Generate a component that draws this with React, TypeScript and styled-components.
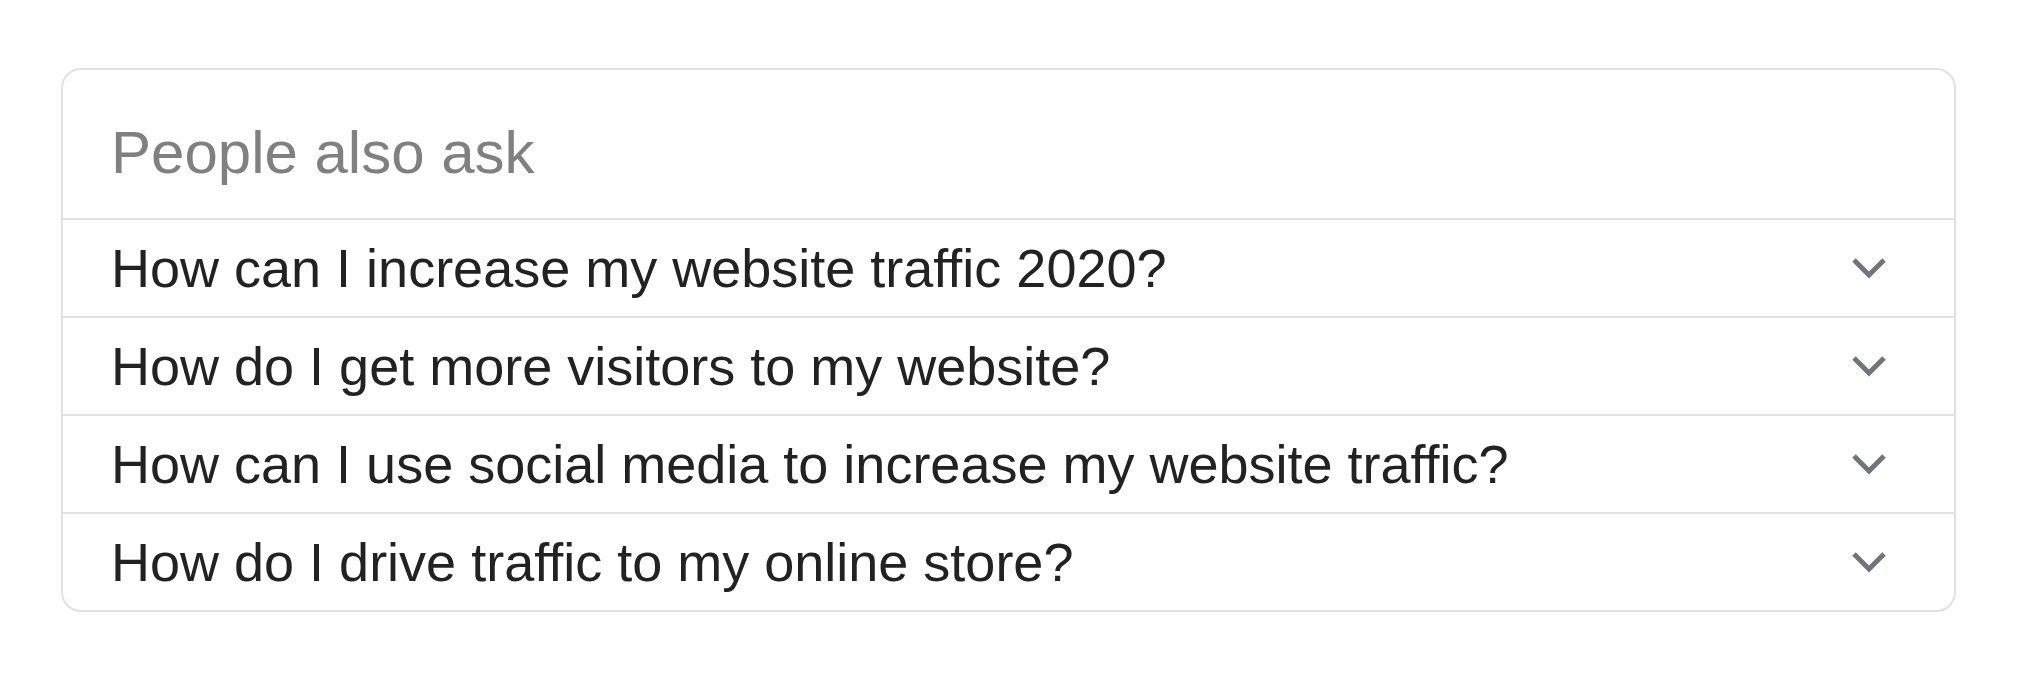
import React from "react";
import styled, { createGlobalStyle } from "styled-components";

const GlobalStyle = createGlobalStyle`
  html, body {
    margin: 0;
    padding: 0;
    background: #ffffff;
  }
  body {
    font-family: "Liberation Sans", Arial, Helvetica, sans-serif;
  }
`;

const Page = styled.div`
  padding: 68px 0 0 61px;
`;

const Card = styled.section`
  box-sizing: border-box;
  width: 1895px;
  border: 2px solid #e1e1e1;
  border-radius: 20px;
  overflow: hidden;
  background: #fff;
`;

const Header = styled.h2`
  box-sizing: border-box;
  margin: 0;
  height: 148px;
  padding: 49px 0 0 48px;
  font-size: 60px;
  line-height: 68px;
  font-weight: 400;
  color: #808080;
`;

const Row = styled.div`
  box-sizing: border-box;
  display: flex;
  align-items: center;
  justify-content: space-between;
  height: 98px;
  padding: 0 68px 0 48px;
  border-top: 2px solid #e1e1e1;
`;

const Question = styled.span`
  font-size: 54px;
  line-height: 62px;
  color: #222222;
`;

const Chevron = styled.svg`
  width: 34px;
  height: 21px;
  flex: none;
  display: block;
`;

const questions = [
  "How can I increase my website traffic 2020?",
  "How do I get more visitors to my website?",
  "How can I use social media to increase my website traffic?",
  "How do I drive traffic to my online store?",
];

export default function App() {
  return (
    <>
      <GlobalStyle />
      <Page>
        <Card>
          <Header>People also ask</Header>
          {questions.map((q) => (
            <Row key={q}>
              <Question>{q}</Question>
              <Chevron viewBox="0 0 34 21" aria-hidden="true">
                <polyline
                  points="2,2 17,17 32,2"
                  fill="none"
                  stroke="#70757a"
                  strokeWidth={5}
                  strokeLinecap="butt"
                  strokeLinejoin="miter"
                />
              </Chevron>
            </Row>
          ))}
        </Card>
      </Page>
    </>
  );
}
